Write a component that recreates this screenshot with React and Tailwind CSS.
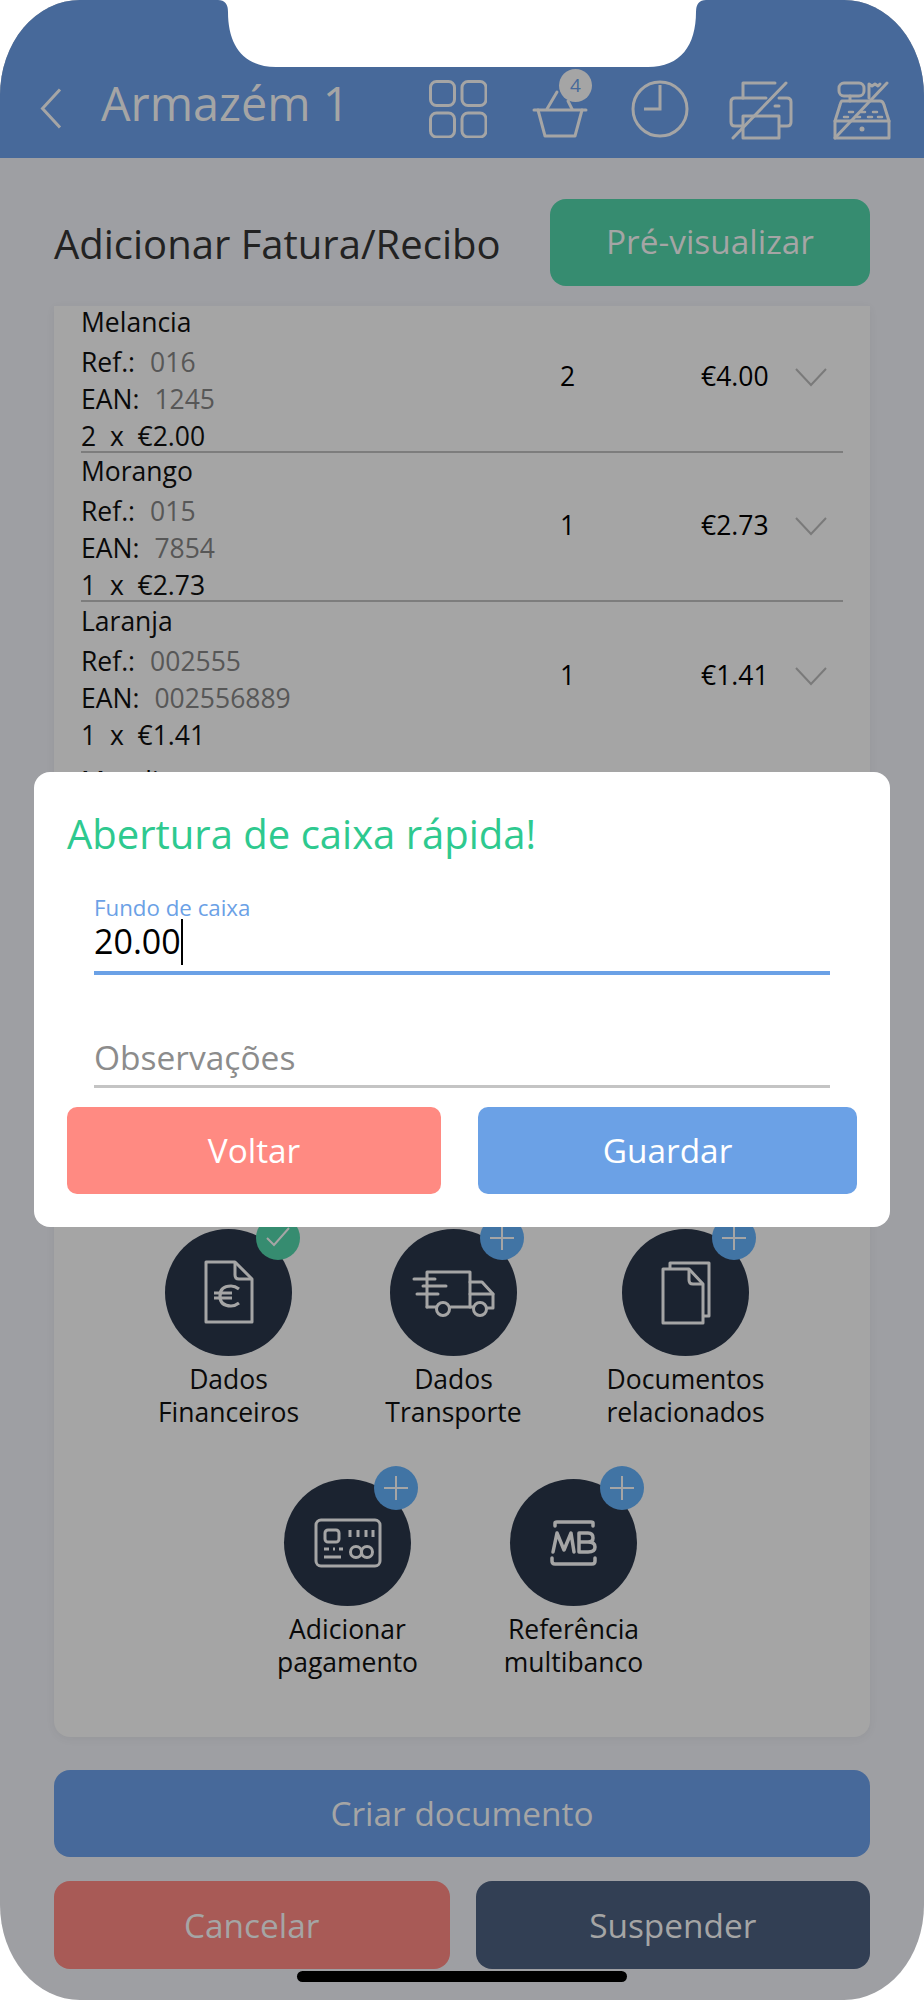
import React from "react";

const S = "#a5a5a5";

function Chevron() {
  return (
    <svg width="34" height="20" viewBox="0 0 34 20" fill="none" stroke="#7a7a7a" strokeWidth="2">
      <path d="M2 2 L17 18 L32 2" />
    </svg>
  );
}

function Row({ name, ref_, ean, qty, unit, total, border }) {
  return (
    <div className={"mx-[27px] flex h-[149px] items-center " + (border ? "border-b-2 border-[#7d7d7d]" : "")}>
      <div className="mt-[3px] w-[479px] text-[26.5px] leading-[37px] text-[#0a0a0a]">
        <div className="mb-[3px]">{name}</div>
        <div>Ref.:<span className="ml-[15px] text-[#575757]">{ref_}</span></div>
        <div>EAN:<span className="ml-[15px] text-[#575757]">{ean}</span></div>
        <div className="whitespace-pre">{unit}</div>
      </div>
      <div className="mb-[2px] w-[141px] text-[26.5px]">{qty}</div>
      <div className="mb-[2px] w-[93px] text-[26.5px]">{total}</div>
      <div className="mb-[2px]"><Chevron /></div>
    </div>
  );
}

function Grid() {
  return (
    <svg width="58" height="58" viewBox="0 0 58 58" fill="none" stroke={S} strokeWidth="3">
      <rect x="1.5" y="1.5" width="24" height="24" rx="6" />
      <rect x="33" y="1.5" width="24" height="24" rx="6" />
      <rect x="1.5" y="33" width="24" height="24" rx="6" />
      <rect x="33" y="33" width="24" height="24" rx="6" />
    </svg>
  );
}

function Basket() {
  return (
    <div className="relative h-[58px] w-[56px]">
      <svg width="56" height="58" viewBox="0 0 56 58" fill="none" stroke={S} strokeWidth="3" strokeLinejoin="round" strokeLinecap="round">
        <path d="M2 30 H54" />
        <path d="M6 30 L13 56 H43 L50 30" />
        <path d="M15 29 L25 12" />
        <path d="M40 29 L36 21" />
      </svg>
      <div className="absolute left-[27px] top-[-11px] flex h-[33px] w-[33px] items-center justify-center rounded-full bg-[#a5a5a5] text-[19px] text-[#47699a]">4</div>
    </div>
  );
}

function Clock() {
  return (
    <svg width="58" height="58" viewBox="0 0 58 58" fill="none" stroke={S} strokeWidth="3">
      <circle cx="29" cy="29" r="27" />
      <path d="M29 5 V29 H13" />
    </svg>
  );
}

function Printer() {
  return (
    <svg width="64" height="60" viewBox="0 0 64 60" fill="none" stroke={S} strokeWidth="3" strokeLinejoin="round" strokeLinecap="round">
      <path d="M14 18 V3 H46" />
      <path d="M14 46 H6 Q2 46 2 42 V22 Q2 18 6 18 H37" />
      <path d="M50 18 H58 Q62 18 62 22 V42 Q62 46 58 46 H51" />
      <path d="M14 36 V58 H50 V36 H14" />
      <path d="M46 26 H50" />
      <path d="M4 58 L57 3" />
    </svg>
  );
}

function Register() {
  return (
    <svg width="58" height="60" viewBox="0 0 58 60" fill="none" stroke={S} strokeWidth="3" strokeLinejoin="round" strokeLinecap="round">
      <rect x="6" y="3" width="25" height="13" rx="5" />
      <path d="M17 16 V21" />
      <path d="M36 18 V4 L39 6 L42 4 L45 6 L47 4" />
      <path d="M9 21 H47 Q50 21 51 25 L56 41 V58 H2 V41 L7 25 Q8 21 9 21 Z" />
      <path d="M2 41 H56" />
      <path d="M16 32 H20 M28 32 H32 M40 32 H44 M11 37 H15 M23 37 H27 M35 37 H39 M45 37 H49" strokeWidth="2.5" />
      <circle cx="29" cy="49" r="2.5" fill={S} stroke="none" />
      <path d="M2 58 L54 3" />
    </svg>
  );
}

function Badge({ check }) {
  return (
    <div className={"absolute top-[-13px] flex h-[44px] w-[44px] items-center justify-center rounded-full " + (check ? "left-[91px] bg-[#368c70]" : "left-[90px] bg-[#4174a4]")}>
      <svg width="26" height="26" viewBox="0 0 26 26" fill="none" stroke={S} strokeWidth="2">
        {check ? <path d="M2 13 L9 20 L24 3" /> : <path d="M13 1 V25 M1 13 H25" />}
      </svg>
    </div>
  );
}

function Euro() {
  return (
    <svg width="50" height="64" viewBox="0 0 50 64" fill="none" stroke={S} strokeWidth="3" strokeLinejoin="round" className="mb-[2px]">
      <path d="M2 2 H31 L48 19 V62 H2 Z" />
      <path d="M31 2 V15 Q31 19 35 19 H48" />
      <path d="M35 29 Q31 26 27 26 Q16 26 16 36 Q16 46 27 46 Q31 46 35 43" strokeWidth="3.2" />
      <path d="M10 33 H28 M10 38 H28" strokeWidth="2.8" />
    </svg>
  );
}

function Truck() {
  return (
    <svg width="84" height="48" viewBox="0 0 84 48" fill="none" stroke={S} strokeWidth="3" strokeLinejoin="round" strokeLinecap="round" className="mt-[3px]">
      <path d="M15 37 V2 H58 V37 H39" />
      <path d="M15 37 H24" />
      <path d="M58 12 H70 L81 24 V38 H76" />
      <path d="M58 24 H81" />
      <path d="M58 37 H61" />
      <circle cx="31" cy="39" r="6.5" />
      <circle cx="68" cy="39" r="6.5" />
      <path d="M2 9 H23 M11 16 H34 M5 24 H26" />
    </svg>
  );
}

function Docs() {
  return (
    <svg width="50" height="64" viewBox="0 0 50 64" fill="none" stroke={S} strokeWidth="3" strokeLinejoin="round">
      <path d="M9 8 V2 H48 V55 H43" />
      <path d="M2 8 H28 L42 23 V62 H2 Z" />
      <path d="M28 8 V19 Q28 23 32 23 H42" />
    </svg>
  );
}

function Card() {
  return (
    <svg width="68" height="50" viewBox="0 0 68 50" fill="none" stroke={S} strokeWidth="3" strokeLinejoin="round">
      <rect x="2" y="2" width="64" height="46" rx="5" />
      <rect x="11" y="12" width="14" height="12" rx="3" />
      <path d="M36 12 V19 M44 12 V19 M52 12 V19 M59 12 V19" />
      <path d="M10 31 H15 M19 31 H21 M25 31 H29 M10 39 H27" />
      <circle cx="42" cy="34" r="5.5" />
      <circle cx="53" cy="34" r="5.5" />
    </svg>
  );
}

function MB() {
  return (
    <svg width="48" height="46" viewBox="0 0 48 46" fill="none" stroke={S} strokeWidth="3.5" strokeLinejoin="round" strokeLinecap="round">
      <path d="M5 6 V3 Q5 2 7 2 H41 Q43 2 43 3 V6" />
      <path d="M2 38 V41 Q2 44 5 44 H42 Q45 44 45 41 V38" />
      <path d="M3 32 L7 13 L14 30 L21 13 L24 32" />
      <path d="M29 13 H38 Q43 13 43 18 Q43 22 38 22 H29 M38 22 Q45 22 45 27 Q45 32 38 32 H29 V13" />
    </svg>
  );
}

function Action({ icon, check, line1, line2, className }) {
  return (
    <div className={"relative flex w-[127px] flex-col items-center " + (className || "")}>
      <div className="relative flex h-[127px] w-[127px] items-center justify-center rounded-full bg-[#1b2330]">
        {icon}
        <Badge check={check} />
      </div>
      <div className="mt-[7px] whitespace-nowrap text-center text-[26.5px] leading-[33px] text-[#0a0a0a]">
        <div>{line1}</div>
        <div>{line2}</div>
      </div>
    </div>
  );
}

export default function App() {
  return (
    <div className="relative h-[2000px] w-[924px] overflow-hidden bg-white" style={{ fontFamily: '"Open Sans", sans-serif' }}>
      <div className="relative h-[2000px] w-[924px] overflow-hidden rounded-[80px/95px] bg-[#9e9fa3]">
        <header className="flex h-[158px] items-start bg-[#47699a] pl-[40px] pt-[80px]">
          <svg className="mt-[8px]" width="22" height="41" viewBox="0 0 22 41" fill="none" stroke={S} strokeWidth="3">
            <path d="M20 1.5 L2.5 20.5 L20 39.5" />
          </svg>
          <div className="ml-[39px] h-[58px] w-[328px] whitespace-nowrap text-[46.8px] leading-[47px] text-[#a5a5a5]">Armazém 1</div>
          <Grid />
          <div className="ml-[45px]"><Basket /></div>
          <div className="ml-[43px]"><Clock /></div>
          <div className="ml-[40px]"><Printer /></div>
          <div className="ml-[40px]"><Register /></div>
        </header>

        <div className="mx-[54px] mt-[41px] flex items-center justify-between">
          <div className="h-[87px] pt-[2px] text-[40px] leading-[85px] text-[#222222]">Adicionar Fatura/Recibo</div>
          <div className="flex h-[87px] w-[320px] items-center justify-center rounded-[16px] bg-[#368c70] pb-[2px] text-[33.4px] text-[#a5a5a5]">Pré-visualizar</div>
        </div>

        <section className="mx-[54px] mt-[20px] flow-root h-[1431px] rounded-b-[16px] bg-[#a5a5a5] shadow-[0_2px_10px_rgba(0,0,0,0.05)]">
          <div className="-mt-[2px]">
            <Row name="Melancia" ref_="016" ean="1245" qty="2" unit="2  x  €2.00" total="€4.00" border />
          </div>
          <Row name="Morango" ref_="015" ean="7854" qty="1" unit="1  x  €2.73" total="€2.73" border />
          <Row name="Laranja" ref_="002555" ean="002556889" qty="1" unit="1  x  €1.41" total="€1.41" />
          <div className="ml-[27px] mt-[12px] h-[466px] text-[26.5px] leading-[37px] text-[#0a0a0a]">Mandioca</div>
          <div className="ml-[111px] flex">
            <Action icon={<Euro />} check line1="Dados" line2="Financeiros" />
            <Action icon={<Truck />} line1="Dados" line2="Transporte" className="ml-[98px]" />
            <Action icon={<Docs />} line1="Documentos" line2="relacionados" className="ml-[105px]" />
          </div>
          <div className="ml-[230px] mt-[50px] flex">
            <Action icon={<Card />} line1="Adicionar" line2="pagamento" />
            <Action icon={<MB />} line1="Referência" line2="multibanco" className="ml-[99px]" />
          </div>
        </section>

        <div className="mx-[54px] mt-[33px] flex h-[87px] items-center justify-center rounded-[16px] bg-[#47699a] text-[33.4px] text-[#a5a5a5]">Criar documento</div>
        <div className="mx-[54px] mt-[24px] flex gap-[26px]">
          <div className="flex h-[88px] w-[396px] items-center justify-center rounded-[16px] bg-[#a85a56] text-[33.4px] text-[#a5a5a5]">Cancelar</div>
          <div className="flex h-[88px] w-[395px] items-center justify-center rounded-[16px] bg-[#323f54] text-[33.4px] text-[#a5a5a5]">Suspender</div>
        </div>
      </div>

      {/* notch */}
      <svg className="absolute left-[218px] top-0" width="488" height="67" viewBox="0 0 488 67" fill="white">
        <path d="M0 0 Q10 0 10 12 C10 45 25 67 58 67 H430 C463 67 478 45 478 12 Q478 0 488 0 Z" />
      </svg>

      {/* home indicator */}
      <div className="absolute left-[297px] top-[1971px] h-[11px] w-[330px] rounded-full bg-black" />

      {/* modal */}
      <div className="absolute left-[34px] top-[772px] h-[455px] w-[856px] rounded-[16px] bg-white px-[33px]">
        <div className="mt-[19px] h-[60px] pt-[16px] text-[40px] leading-[53px] text-[#2ec98f]">Abertura de caixa rápida!</div>
        <div className="mx-[27px] mt-[43px]">
          <div className="text-[22.3px] leading-[27px] text-[#6ba1e6]">Fundo de caixa</div>
          <div className="flex h-[54px] items-center border-b-4 border-[#6ba1e6] pb-[9px] text-[34px] text-black">
            20.00<span className="h-[46px] w-[2px] bg-black" />
          </div>
          <div className="mt-[60px] h-[53px] border-b-[3px] border-[#c4c4c4] text-[33.5px] leading-[44px] text-[#8c8c8c]">Observações</div>
        </div>
        <div className="mt-[19px] flex justify-between">
          <div className="flex h-[87px] w-[374px] items-center justify-center rounded-[10px] bg-[#ff8a82] text-[33.4px] text-white">Voltar</div>
          <div className="flex h-[87px] w-[379px] items-center justify-center rounded-[10px] bg-[#6ba1e6] text-[33.4px] text-white">Guardar</div>
        </div>
      </div>
    </div>
  );
}
